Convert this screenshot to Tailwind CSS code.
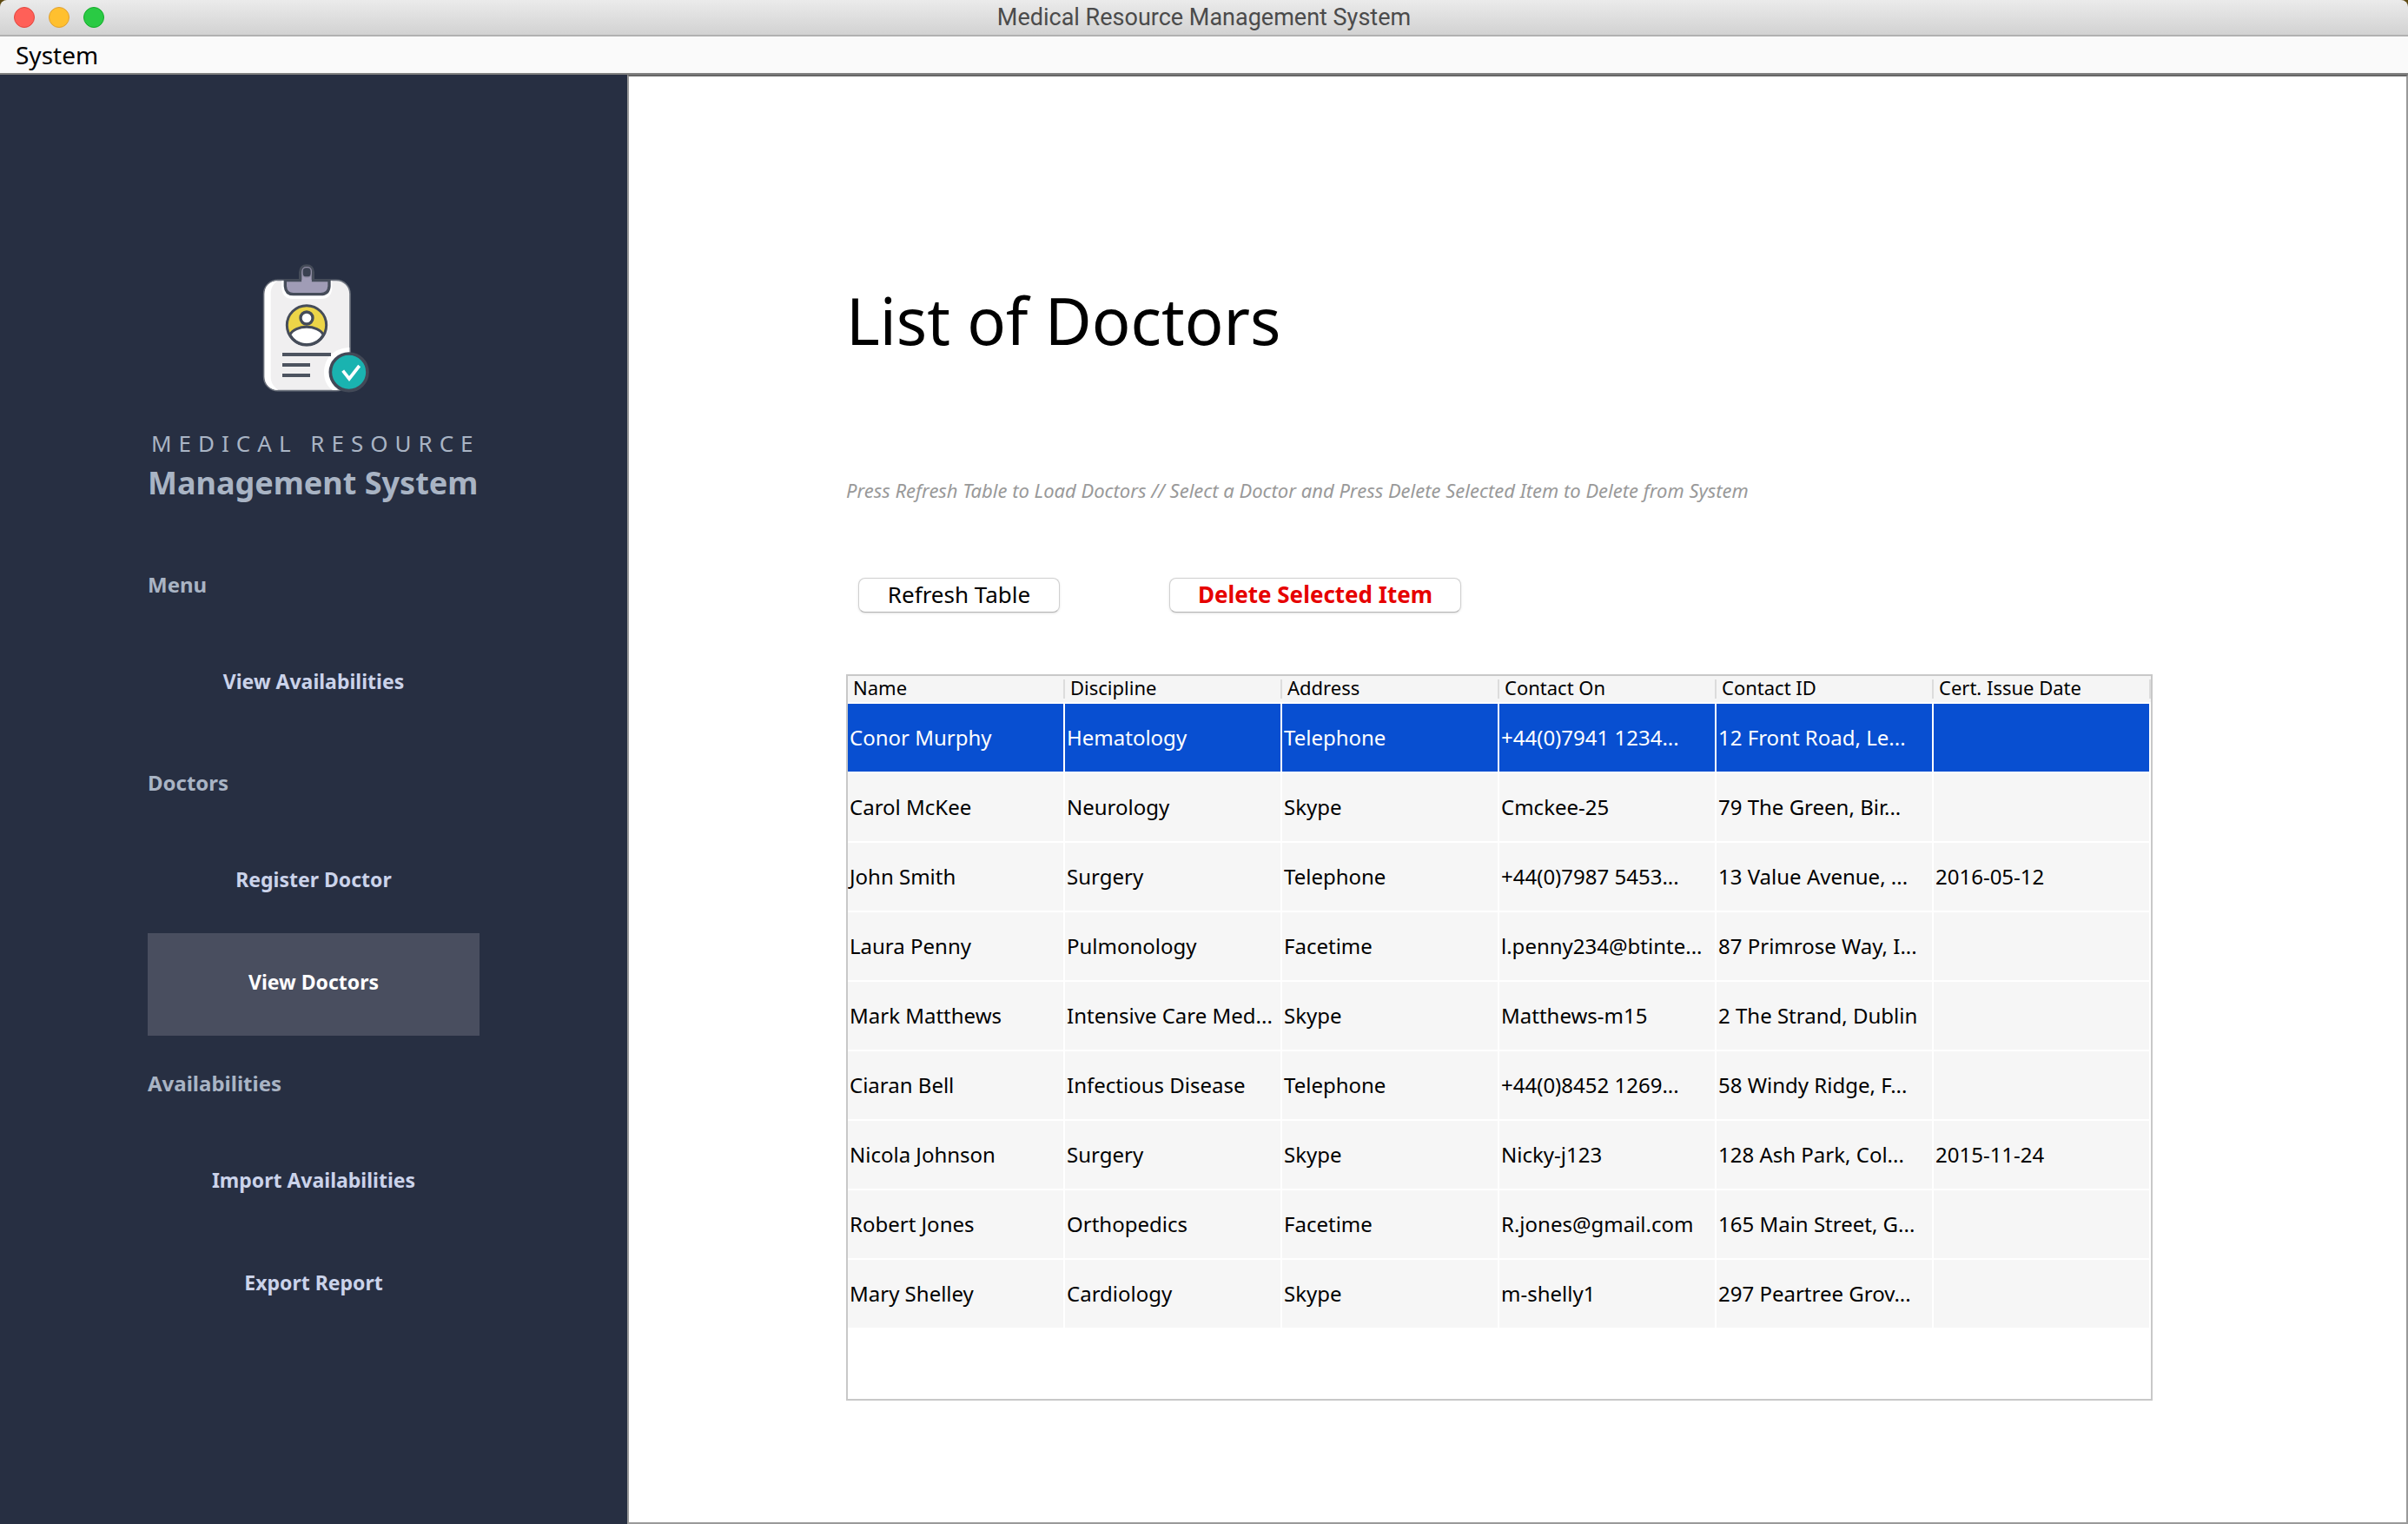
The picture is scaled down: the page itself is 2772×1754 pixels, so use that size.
<!DOCTYPE html>
<html lang="en">
<head>
<meta charset="utf-8">
<title>Medical Resource Management System</title>
<script src="https://cdn.jsdelivr.net/npm/@tailwindcss/browser@4"></script>
</head>
<body class="bg-[#5e4a12] font-['Noto_Sans',sans-serif] text-black">
<div class="flex min-h-screen flex-col">
  <header class="grid h-[42px] shrink-0 grid-cols-3 items-center rounded-t-lg border-b-2 border-[#b1b1b1] bg-linear-to-b from-[#ebebeb] to-[#d2d2d2]">
    <div class="flex gap-4 pl-4">
      <button aria-label="Close" class="size-6 rounded-full border border-[#e2463f] bg-[#ff6058]"></button>
      <button aria-label="Minimize" class="size-6 rounded-full border border-[#e0a032] bg-[#ffc02f]"></button>
      <button aria-label="Zoom" class="size-6 rounded-full border border-[#12ac28] bg-[#2aca44]"></button>
    </div>
    <h1 class="text-center font-[Roboto,sans-serif] text-[27px] leading-8 whitespace-nowrap text-[#4b4b4b]">Medical Resource Management System</h1>
  </header>
  <nav class="flex h-11 shrink-0 items-center border-b-2 border-[#808080] bg-[#fafafa] pl-[18px]">
    <button class="text-[28px] leading-10">System</button>
  </nav>
  <div class="flex grow">
    <aside class="flex w-[722px] shrink-0 flex-col items-center bg-[#272f42] pt-[204px]">
      <svg class="size-[180px]" viewBox="0 0 540 540" fill="none" stroke-linecap="butt" aria-hidden="true">
        <rect x="98" y="97" width="298" height="382" rx="48" fill="#f0eff0" stroke="#6b717c" stroke-width="5"/>
        <path d="M146 100C116 102 101 118 101 146V430C101 458 120 476 148 477C130 464 122 450 122 430V146C122 124 130 110 146 100Z" fill="#fff"/>
        <path d="M160 100V124Q162 162 198 162H296Q332 162 334 124V100Z" fill="#fff"/>
        <path d="M172 98V118Q174 146 200 146H294Q322 146 324 118V98H268V70Q266 48 246 48Q226 48 224 70V98Z" fill="#a09cb6" stroke="#454c59" stroke-width="10"/>
        <path d="M229 96H263V104H229Z" fill="#a09cb6"/>
        <rect x="231" y="53" width="31" height="34" rx="13" fill="#3a4151" stroke="#8f8ca3" stroke-width="4"/>
        <circle cx="246" cy="253" r="68" fill="#ecd548"/>
        <path d="M188 286C206 250 286 250 304 286C292 308 270 320 246 320C222 320 200 308 188 286Z" fill="#fff" stroke="#454c59" stroke-width="9"/>
        <circle cx="246" cy="253" r="68" stroke="#454c59" stroke-width="9"/>
        <circle cx="246" cy="228" r="21" fill="#fff" stroke="#454c59" stroke-width="10"/>
        <path d="M394 330C340 332 306 366 306 416C306 444 318 466 336 477H350L394 440Z" fill="#fff"/>
        <path d="M162 354H330M162 390H258M162 426H258" stroke="#4c535f" stroke-width="12"/>
        <circle cx="392" cy="415" r="64" fill="#1ab3b0" stroke="#424957" stroke-width="11"/>
        <path d="M371 410L393 438L428 393" stroke="#fff" stroke-width="11"/>
      </svg>
      <div class="flex w-[382px] flex-col">
        <p class="pt-[22px] pl-1 text-[26px] leading-9 tracking-[8px] whitespace-nowrap text-[#a9b4c4]">MEDICAL RESOURCE</p>
        <p class="pb-[34px] text-4xl leading-14 font-bold whitespace-nowrap text-[#a9b4c4]">Management System</p>
        <h2 class="flex h-[110px] items-center text-2xl font-bold text-[#a9b4c4]">Menu</h2>
        <a href="#" class="flex h-[118px] items-center justify-center pb-1.5 text-[23px] font-bold text-[#cbd3ea]">View Availabilities</a>
        <h2 class="flex h-[110px] items-center text-2xl font-bold text-[#a9b4c4]">Doctors</h2>
        <a href="#" class="flex h-[118px] items-center justify-center pb-1.5 text-[23px] font-bold text-[#cbd3ea]">Register Doctor</a>
        <a href="#" aria-current="page" class="flex h-[118px] items-center justify-center bg-[#494e5f] pb-1.5 text-[23px] font-bold text-white">View Doctors</a>
        <h2 class="flex h-[110px] items-center text-2xl font-bold text-[#a9b4c4]">Availabilities</h2>
        <a href="#" class="flex h-[118px] items-center justify-center pb-1.5 text-[23px] font-bold text-[#cbd3ea]">Import Availabilities</a>
        <a href="#" class="flex h-[118px] items-center justify-center pb-1.5 text-[23px] font-bold text-[#cbd3ea]">Export Report</a>
      </div>
    </aside>
    <main class="min-w-0 grow border-2 border-[#999] border-t-[#666] bg-white pt-[231px] pr-[292px] pb-[137px] pl-[250px]">
      <h2 class="text-[74px] leading-[100px] whitespace-nowrap">List of Doctors</h2>
      <p class="pt-[129px] text-[22px] leading-8 whitespace-nowrap text-[#999] italic">Press Refresh Table to Load Doctors // Select a Doctor and Press Delete Selected Item to Delete from System</p>
      <div class="flex gap-[126px] pt-[85px] pl-3.5">
        <button class="flex h-10 w-[232px] items-center justify-center rounded-lg border border-[#d0d0d0] border-b-[#b4b4b4] bg-white pb-0.5 text-[26px] leading-8 whitespace-nowrap shadow-sm">Refresh Table</button>
        <button class="flex h-10 w-[336px] items-center justify-center rounded-lg border border-[#d0d0d0] border-b-[#b4b4b4] bg-white pb-0.5 text-[26px] leading-8 font-bold whitespace-nowrap text-[#e60000] shadow-sm">Delete Selected Item</button>
      </div>
      <div class="mt-[71px] h-[836px] border-2 border-[#c8c8c8]">
        <table class="w-full table-fixed border-separate border-spacing-0 text-left text-2xl whitespace-nowrap">
          <thead>
            <tr id="columns" class="h-8 bg-[#f5f5f5] text-[22px] leading-7"></tr>
          </thead>
          <tbody id="doctors"></tbody>
        </table>
      </div>
    </main>
  </div>
</div>
<script>
const columns = ['Name', 'Discipline', 'Address', 'Contact On', 'Contact ID', 'Cert. Issue Date'];
const doctors = [
  ['Conor Murphy', 'Hematology', 'Telephone', '+44(0)7941 1234...', '12 Front Road, Le...', ''],
  ['Carol McKee', 'Neurology', 'Skype', 'Cmckee-25', '79 The Green, Bir...', ''],
  ['John Smith', 'Surgery', 'Telephone', '+44(0)7987 5453...', '13 Value Avenue, ...', '2016-05-12'],
  ['Laura Penny', 'Pulmonology', 'Facetime', 'l.penny234@btinte...', '87 Primrose Way, I...', ''],
  ['Mark Matthews', 'Intensive Care Med...', 'Skype', 'Matthews-m15', '2 The Strand, Dublin', ''],
  ['Ciaran Bell', 'Infectious Disease', 'Telephone', '+44(0)8452 1269...', '58 Windy Ridge, F...', ''],
  ['Nicola Johnson', 'Surgery', 'Skype', 'Nicky-j123', '128 Ash Park, Col...', '2015-11-24'],
  ['Robert Jones', 'Orthopedics', 'Facetime', 'R.jones@gmail.com', '165 Main Street, G...', ''],
  ['Mary Shelley', 'Cardiology', 'Skype', 'm-shelly1', '297 Peartree Grov...', ''],
];
document.getElementById('columns').innerHTML = columns.map(c =>
  `<th class="border-b-2 border-white py-0 font-normal"><div class="flex h-[22px] items-center border-r-2 border-[#dcdcdc] pb-1 pl-1.5">${c}</div></th>`).join('');
document.getElementById('doctors').innerHTML = doctors.map((row, i) =>
  `<tr class="h-20 ${i === 0 ? 'bg-[#084fd1] text-white' : 'bg-[#f6f6f6]'}">` +
  row.map(v => `<td class="overflow-hidden border-r-2 border-b-2 border-white py-0 pl-0.5">${v}</td>`).join('') + '</tr>').join('');
</script>
</body>
</html>
